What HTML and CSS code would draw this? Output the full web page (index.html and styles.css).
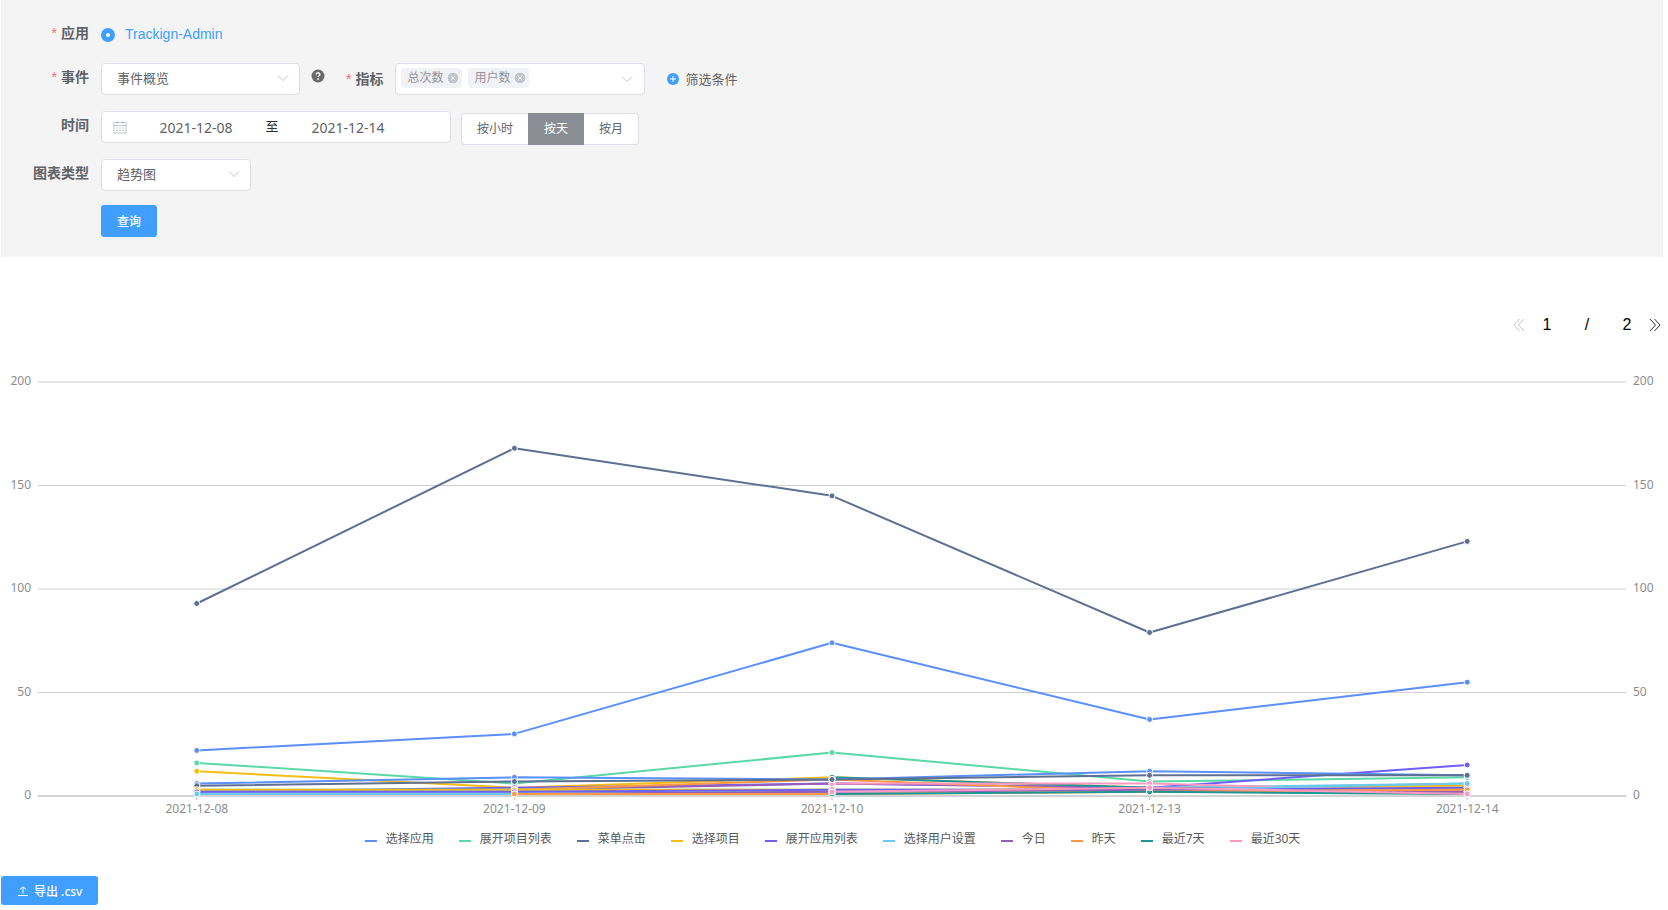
FILE: index.html
```html
<!DOCTYPE html>
<html lang="zh-CN">
<head>
<meta charset="utf-8">
<meta name="viewport" content="width=device-width, initial-scale=1">
<title>事件概览</title>
<link rel="stylesheet" href="styles.css">
</head>
<body>
<main class="page">
  <form class="filters">
    <div class="row row-app">
      <span class="label required">应用</span>
      <label class="radio"><input type="radio" name="app" checked><span>Trackign-Admin</span></label>
    </div>
    <div class="row">
      <label class="label required" for="event">事件</label>
      <div class="select select-event">
        <select id="event"><option>事件概览</option></select>
        <svg class="chevron" viewBox="0 0 12 12"><path d="M1 3.5 6 8.5 11 3.5"/></svg>
      </div>
      <button type="button" class="help" aria-label="帮助">
        <svg viewBox="0 0 14 14"><circle cx="7" cy="7" r="6.5" fill="#6b6b6b"/><path d="M5.1 5.6C5.2 3.2 8.9 3.3 8.9 5.4 8.9 6.7 7.1 6.7 7.1 8.1" fill="none" stroke="#f5f5f5" stroke-width="1.4"/><circle cx="7.1" cy="10" r=".9" fill="#f5f5f5"/></svg>
      </button>
      <span class="label label-inline required" id="metric-label">指标</span>
      <div class="multi" role="group" aria-labelledby="metric-label">
        <span class="tag">总次数<button type="button" class="tag-close" aria-label="移除总次数"><svg viewBox="0 0 12 12"><circle cx="6" cy="6" r="6"/><path d="M3.8 3.8 8.2 8.2M8.2 3.8 3.8 8.2"/></svg></button></span>
        <span class="tag">用户数<button type="button" class="tag-close" aria-label="移除用户数"><svg viewBox="0 0 12 12"><circle cx="6" cy="6" r="6"/><path d="M3.8 3.8 8.2 8.2M8.2 3.8 3.8 8.2"/></svg></button></span>
        <svg class="chevron" viewBox="0 0 12 12"><path d="M1 3.5 6 8.5 11 3.5"/></svg>
      </div>
      <button type="button" class="add-filter">
        <svg viewBox="0 0 12 12"><circle cx="6" cy="6" r="6" fill="#409eff"/><path d="M3 6h6M6 3v6" stroke="#fff" stroke-width="1"/></svg><span>筛选条件</span>
      </button>
    </div>
    <div class="row">
      <label class="label" for="start">时间</label>
      <div class="range">
        <svg class="calendar" viewBox="0 0 14 14"><path d="M1 2.500h12v10.500H1zM1 5.500h12M4 1v3M10 1v3M3 8h2M6 8h2M9 8h2M3 10.500h2M6 10.500h2M9 10.500h2"/></svg>
        <input id="start" type="text" value="2021-12-08" aria-label="开始日期">
        <span class="to">至</span>
        <input type="text" value="2021-12-14" aria-label="结束日期">
      </div>
      <div class="group">
        <button type="button">按小时</button><button type="button" class="active">按天</button><button type="button">按月</button>
      </div>
    </div>
    <div class="row">
      <label class="label" for="kind">图表类型</label>
      <div class="select select-kind">
        <select id="kind"><option>趋势图</option></select>
        <svg class="chevron" viewBox="0 0 12 12"><path d="M1 3.5 6 8.5 11 3.5"/></svg>
      </div>
    </div>
    <div class="row row-submit">
      <button type="button" class="primary">查询</button>
    </div>
  </form>

  <nav class="pager" aria-label="分页">
    <button type="button" class="prev" disabled aria-label="上一页"><svg viewBox="0 0 12 14"><path d="M6.500 1 1 7l5.500 6M11 1 5.500 7 11 13"/></svg></button>
    <span>1</span><span>/</span><span>2</span>
    <button type="button" class="next" aria-label="下一页"><svg viewBox="0 0 12 14"><path d="M1 1 6.500 7 1 13M5.500 1 11 7 5.500 13"/></svg></button>
  </nav>

  <svg class="chart" id="chart" role="img" aria-label="趋势图"></svg>
  <ul class="legend" id="legend"></ul>

  <button type="button" class="primary export">
    <svg viewBox="0 0 12 12"><path d="M1 10.500h10M6 8.500V2M3 4.500 6 1.800l3 2.700"/></svg>导出 .csv
  </button>
</main>
<script src="chart.js"></script>
</body>
</html>
```
FILE: styles.css
```css
* { box-sizing: border-box; }
body {
  margin: 0;
  background: #fff;
  color: #606266;
  font-family: "Noto Sans", "Noto Sans CJK SC", sans-serif;
  font-size: 13px;
}
button, input, select { font: inherit; color: inherit; }
button { padding: 0; border: 0; background: none; cursor: pointer; }
svg { display: block; }

.page { margin: 0 5px 0 1px; }
.filters {
  display: flex;
  flex-direction: column;
  gap: 16px;
  padding: 15px 0 20px;
  background: #f4f4f4;
}
.row { display: flex; height: 32px; }
.label {
  width: 88px;
  margin-right: 12px;
  font-size: 14px;
  font-weight: 700;
  line-height: 28px;
  text-align: right;
}
.row-app .label { line-height: 36px; }
.row-submit { margin-top: -2px; padding-left: 100px; }
.label-inline { width: auto; margin-left: 21px; line-height: 32px; }
.required::before {
  content: "*";
  margin-right: 4px;
  color: #f56c6c;
  font-family: "Liberation Sans", sans-serif;
  font-weight: 400;
}
.radio {
  display: flex;
  align-items: center;
  gap: 10px;
  height: 40px;
  color: #409eff;
  font: 14px "Liberation Sans", Arial, sans-serif;
}
.radio span { padding-bottom: 2px; }
.radio input {
  appearance: none;
  width: 14px;
  height: 14px;
  margin: 0;
  border: 5px solid #409eff;
  border-radius: 50%;
  background: #fff;
}

.select { position: relative; }
.select-event { width: 199px; }
.select-kind { width: 150px; }
.select select {
  appearance: none;
  width: 100%;
  height: 32px;
  padding: 0 30px 2px 15px;
  border: 1px solid #dcdfe6;
  border-radius: 4px;
  background: #fff;
}
.chevron {
  position: absolute;
  top: 9px;
  right: 11px;
  width: 12px;
  height: 12px;
  fill: none;
  stroke: #c0c4cc;
  pointer-events: none;
}
.help { width: 14px; height: 14px; margin: 6px 0 0 11px; }

.multi {
  position: relative;
  display: flex;
  align-items: center;
  gap: 6px;
  width: 250px;
  padding: 0 0 2px 5px;
  border: 1px solid #dcdfe6;
  border-radius: 4px;
  background: #fff;
}
.tag {
  display: flex;
  align-items: center;
  gap: 4px;
  height: 20px;
  padding: 0 3px 0 6px;
  border-radius: 4px;
  background: #f0f2f5;
  color: #909399;
  font-size: 12px;
  line-height: 18px;
}
.tag-close svg { width: 12px; height: 12px; fill: #c0c4cc; stroke: #fff; }
.add-filter { display: flex; align-items: center; gap: 6px; margin-left: 22px; }
.add-filter svg { width: 12px; height: 12px; }
.add-filter span { padding-bottom: 2px; }

.range {
  display: flex;
  align-items: center;
  width: 350px;
  padding: 0 11px;
  border: 1px solid #dcdfe6;
  border-radius: 4px;
  background: #fff;
}
.calendar { width: 14px; height: 14px; margin-right: 3px; fill: none; stroke: #c0c4cc; }
.range input {
  width: 132px;
  height: 28px;
  padding: 0;
  border: 0;
  background: none;
  font-size: 14px;
  text-align: center;
}
.range .to { width: 20px; padding-bottom: 3px; color: #303133; text-align: center; }
.group { display: flex; margin: 2px 0 0 10px; height: 32px; }
.group button {
  padding: 0 15px 2px;
  border: 1px solid #dcdfe6;
  background: #fff;
  font-size: 12px;
}
.group button:first-child { border-radius: 4px 0 0 4px; border-right: 0; }
.group button:last-child { border-radius: 0 4px 4px 0; border-left: 0; }
.group .active { border-color: #8a8d94; background: #8a8d94; color: #fff; }
.primary {
  height: 32px;
  padding: 0 16px;
  border-radius: 3px;
  background: #409eff;
  color: #fff;
  font-size: 12px;
  font-weight: 500;
}

.pager {
  display: flex;
  align-items: center;
  justify-content: flex-end;
  margin-top: 58px;
  padding-right: 2px;
  color: #000;
  font: 16px/20px "Liberation Sans", Arial, sans-serif;
}
.pager span { width: 40px; text-align: center; }
.pager svg { width: 12px; height: 14px; fill: none; stroke: #303133; }
.prev { margin-right: 2px; }
.next { margin-left: 2px; }
.pager .prev svg { stroke: #c0c4cc; }

.chart { width: 100%; height: 472px; margin-top: 14px; }
.chart text { fill: #8c8c8c; font-size: 12px; }
.grid { stroke: #d0d0d0; }
.axis { stroke: #bfbfbf; }
.line { fill: none; stroke-width: 2; stroke-linejoin: round; }
.dot { stroke: #fff; stroke-width: 1; }

.legend {
  display: flex;
  flex-wrap: wrap;
  justify-content: center;
  gap: 8px 25px;
  margin: 9px 0 0;
  padding: 0 0 0 1px;
  list-style: none;
  color: #595959;
  font-size: 12px;
  line-height: 18px;
}
.legend li { display: flex; align-items: center; gap: 9px; }
.swatch { width: 12px; height: 2px; margin-top: 3px; }

.export { display: flex; align-items: center; gap: 5px; height: 29px; margin-top: 28px; }
.export svg { width: 12px; height: 12px; fill: none; stroke: #fff; }
```
FILE: chart.js
```js
const dates = ["2021-12-08", "2021-12-09", "2021-12-10", "2021-12-13", "2021-12-14"];
// Each series holds the total count and the user count per date.
const series = [
  { name: "选择应用", color: "#5b8ff9", total: [22, 30, 74, 37, 55], users: [6, 9, 8, 12, 10] },
  { name: "展开项目列表", color: "#5ad8a6", total: [16, 6, 21, 7, 9], users: [3, 3, 3, 3, 4] },
  { name: "菜单点击", color: "#5d7092", total: [93, 168, 145, 79, 123], users: [5, 7, 8, 10, 10] },
  { name: "选择项目", color: "#f6bd16", total: [12, 4, 9, 4, 5], users: [3, 3, 3, 3, 4] },
  { name: "展开应用列表", color: "#6f5ef9", total: [2, 4, 6, 4, 15], users: [2, 2, 3, 3, 4] },
  { name: "选择用户设置", color: "#6dc8ec", total: [2, 2, 2, 4, 6], users: [1, 1, 2, 3, 6] },
  { name: "今日", color: "#945fb9", total: [null, 3, 6, 4, 2], users: [null, 1, 2, 3, 2] },
  { name: "昨天", color: "#ff9845", total: [null, 3, 8, 2, 3], users: [null, 1, 1, 2, 3] },
  { name: "最近7天", color: "#1e9493", total: [null, null, 9, 4, 1], users: [null, null, 1, 2, 1] },
  { name: "最近30天", color: "#ff99c3", total: [null, null, 6, 6, 2], users: [null, null, 2, 4, 1] }
];
const svg = document.getElementById("chart");

function add(tag, attrs, text) {
  const el = document.createElementNS("http://www.w3.org/2000/svg", tag);
  for (const key in attrs) el.setAttribute(key, attrs[key]);
  if (text !== undefined) el.textContent = text;
  svg.appendChild(el);
}

function draw() {
  svg.replaceChildren();
  const width = svg.clientWidth;
  const left = 37, right = width - 37, zero = 447, height = 414;
  const step = (right - left) / dates.length;
  const x = i => left + step * (i + 0.5);
  const y = v => zero - v * height / 200;
  for (let v = 0; v <= 200; v += 50) {
    add("line", { class: "grid", x1: left, x2: right, y1: y(v), y2: y(v) });
    add("text", { x: left - 7, y: y(v) + 3, "text-anchor": "end" }, v);
    add("text", { x: right + 7, y: y(v) + 3 }, v);
  }
  add("line", { class: "axis", x1: left, x2: right, y1: zero, y2: zero });
  dates.forEach((d, i) => {
    add("line", { class: "axis", x1: x(i), x2: x(i), y1: zero, y2: zero + 4 });
    add("text", { x: x(i), y: zero + 17, "text-anchor": "middle" }, d);
  });
  const sets = ["total", "users"].flatMap(key => series.map(s => [s, key]));
  for (const [s, key] of sets) {
    const pts = s[key].map((v, i) => v === null ? null : x(i) + "," + y(v)).filter(Boolean);
    add("polyline", { class: "line", stroke: s.color, points: pts.join(" ") });
  }
  for (const [s, key] of sets) {
    s[key].forEach((v, i) => {
      if (v !== null) add("circle", { class: "dot", cx: x(i), cy: y(v), r: 3, fill: s.color });
    });
  }
}

const legend = document.getElementById("legend");
for (const s of series) {
  const item = document.createElement("li");
  const swatch = document.createElement("span");
  swatch.className = "swatch";
  swatch.style.background = s.color;
  item.append(swatch, s.name);
  legend.appendChild(item);
}
draw();
window.addEventListener("resize", draw);
```
